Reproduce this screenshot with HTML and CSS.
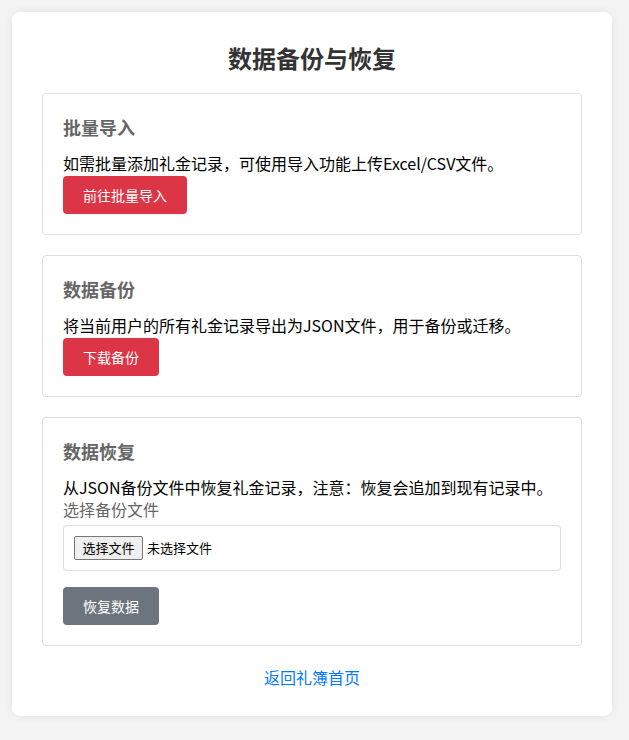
FILE: index.html
```html
<!DOCTYPE html>
<html lang="zh-CN">
<head>
<meta charset="utf-8">
<title>数据备份与恢复</title>
<link rel="stylesheet" href="styles.css">
</head>
<body>
<div class="card">
  <h1 class="title">数据备份与恢复</h1>

  <section class="panel">
    <h3 class="panel-title">批量导入</h3>
    <p class="panel-text">如需批量添加礼金记录，可使用导入功能上传Excel/CSV文件。</p>
    <a class="btn btn-danger" href="#">前往批量导入</a>
  </section>

  <section class="panel">
    <h3 class="panel-title">数据备份</h3>
    <p class="panel-text">将当前用户的所有礼金记录导出为JSON文件，用于备份或迁移。</p>
    <a class="btn btn-danger" href="#">下载备份</a>
  </section>

  <section class="panel">
    <h3 class="panel-title">数据恢复</h3>
    <p class="panel-text">从JSON备份文件中恢复礼金记录，注意：恢复会追加到现有记录中。</p>
    <label class="field-label" for="backup">选择备份文件</label>
    <div class="file-box">
      <label class="file-btn" for="backup">选择文件</label>
      <span class="file-name">未选择文件</span>
      <input class="file-input" type="file" id="backup" accept=".json">
    </div>
    <button class="btn btn-secondary" type="button">恢复数据</button>
  </section>

  <div class="back">
    <a class="back-link" href="#">返回礼簿首页</a>
  </div>
</div>
</body>
</html>
```

FILE: styles.css
```css
* {
  box-sizing: border-box;
}

html, body {
  margin: 0;
  padding: 0;
}

body {
  background: #f4f4f4;
  font-family: "Noto Sans CJK SC", "Noto Sans", sans-serif;
  color: #000;
  padding: 12px;
}

.card {
  width: 600px;
  background: #fff;
  border-radius: 8px;
  box-shadow: 0 0 10px rgba(0, 0, 0, 0.08);
  padding: 30px 30px 29px;
}

.title {
  margin: 0 0 19px;
  font-size: 24px;
  line-height: 32px;
  font-weight: 700;
  color: #333;
  text-align: center;
}

.panel {
  display: flex;
  flex-direction: column;
  align-items: flex-start;
  border: 1px solid #ddd;
  border-radius: 4px;
  padding: 20px;
  margin-bottom: 20px;
}

.panel-title {
  margin: 0 0 10px;
  font-size: 18px;
  line-height: 27px;
  font-weight: 700;
  color: #666;
}

.panel-text {
  margin: 0;
  font-size: 16px;
  line-height: 24px;
}

.btn {
  display: inline-block;
  border: none;
  border-radius: 4px;
  padding: 10px 20px;
  height: 38px;
  font-family: inherit;
  font-size: 14px;
  line-height: 18px;
  color: #fff;
  text-decoration: none;
  cursor: pointer;
  margin-top: 1px;
}

.btn-danger {
  background: #dc3545;
}

.btn-secondary {
  background: #6c757d;
  margin-top: 16px;
}

.field-label {
  display: block;
  font-size: 16px;
  line-height: 20px;
  color: #666;
  margin-bottom: 6px;
}

.file-box {
  display: flex;
  align-items: center;
  gap: 4px;
  width: 100%;
  border: 1px solid #ddd;
  border-radius: 4px;
  padding: 10px;
  height: 46px;
  position: relative;
}

.file-btn {
  display: inline-block;
  width: 69px;
  height: 24px;
  text-align: center;
  font-size: 13px;
  line-height: 22px;
  background: #efefef;
  border: 1px solid #767676;
  border-radius: 2px;
  color: #000;
}

.file-name {
  font-size: 13px;
  line-height: 22px;
  color: #000;
}

.file-input {
  position: absolute;
  width: 1px;
  height: 1px;
  opacity: 0;
  overflow: hidden;
}

.back {
  text-align: center;
  padding-top: 1px;
  font-size: 16px;
  line-height: 20px;
}

.back-link {
  font-size: 16px;
  line-height: 20px;
  color: #007bff;
  text-decoration: none;
}
```
